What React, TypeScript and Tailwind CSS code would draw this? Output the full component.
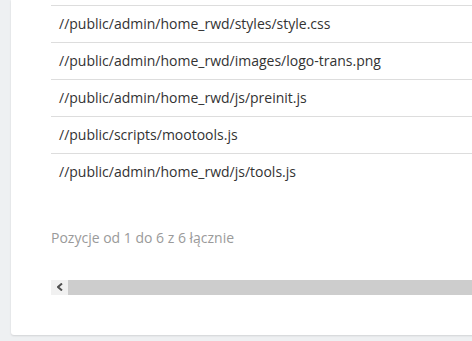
const files = [
  "//public/admin/home_rwd/styles/style.css",
  "//public/admin/home_rwd/images/logo-trans.png",
  "//public/admin/home_rwd/js/preinit.js",
  "//public/scripts/mootools.js",
  "//public/admin/home_rwd/js/tools.js",
];

export default function App() {
  return (
    <div
      className="h-[341px] w-[472px] overflow-hidden bg-[#eef0f2] pl-[11px]"
      style={{ fontFamily: '"Open Sans", sans-serif' }}
    >
      <div className="h-[335px] w-[480px] rounded-br-[3px] rounded-bl-[3px] bg-white pl-[40px] pt-[5px] shadow-[0_1px_2px_rgba(0,0,0,0.12)]">
        <table className="w-[440px] border-collapse">
          <tbody>
            {files.map((f) => (
              <tr key={f}>
                <td className="h-[37px] border-t border-[#dddddd] pl-[8px] text-[14px] leading-[20px] text-[#333333]">
                  {f}
                </td>
              </tr>
            ))}
          </tbody>
        </table>
        <div className="mt-[37px] text-[14px] leading-[20px] text-[#9a9a9a]">
          Pozycje od 1 do 6 z 6 łącznie
        </div>
        <div className="mt-[32px] flex h-[15px] w-[440px]">
          <div className="flex w-[17px] items-center justify-center bg-[#f1f1f1]">
            <svg width="6" height="8" viewBox="0 0 6 8">
              <path d="M5 0.5 L1 4 L5 7.5" fill="none" stroke="#505050" strokeWidth="2" />
            </svg>
          </div>
          <div className="flex-1 bg-[#cdcdcd]" />
        </div>
      </div>
    </div>
  );
}
